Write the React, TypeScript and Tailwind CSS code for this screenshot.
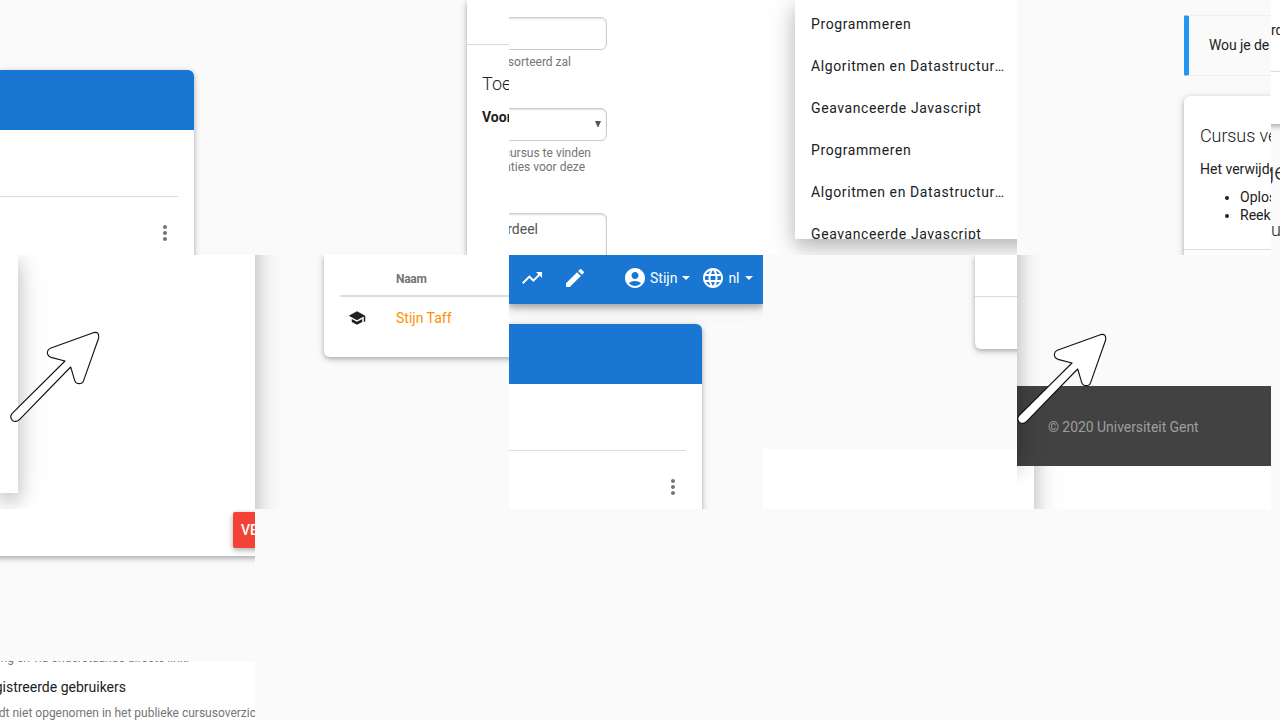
import type { ReactNode } from "react";
import {
  MdAccountCircle,
  MdEdit,
  MdLanguage,
  MdMoreVert,
  MdSchool,
  MdTrendingUp,
} from "react-icons/md";

const cardShadow =
  "shadow-[0_2px_5px_0_rgba(0,0,0,0.26),0_2px_10px_0_rgba(0,0,0,0.1)]";
const deepShadow =
  "shadow-[0_8px_17px_0_rgba(0,0,0,0.2),0_6px_30px_2px_rgba(0,0,0,0.12)]";

function Tile({ children, className = "" }: { children?: ReactNode; className?: string }) {
  return <section className={`relative min-w-0 overflow-hidden ${className}`}>{children}</section>;
}

function Arrow({ className }: { className: string }) {
  return (
    <svg className={`absolute ${className}`} width="92" height="94" viewBox="30 243 276 282">
      <path
        d="M280 248 Q298 243 296 264 L251 391 Q248 401 238 401 Q227 401 224 391 L212 351 L59 508 Q48 519 37 511 Q28 501 36 491 L195 333 L153 322 Q142 318 142 307 Q143 298 151 295 Z"
        fill="#fff"
        stroke="#111"
        strokeWidth="3.4"
        strokeLinejoin="round"
      />
    </svg>
  );
}

function CourseCard() {
  return (
    <div className={`h-[400px] w-[194px] overflow-hidden rounded-tr-[6px] bg-white ${cardShadow}`}>
      <div className="h-[60px] bg-[#1976d2]" />
      <div className="mr-4 h-[67px] border-b border-[#dcdcdc]" />
      <div className="flex justify-end pt-6 pr-[17px]">
        <MdMoreVert size={24} className="text-[#757575]" />
      </div>
    </div>
  );
}

function Help({ children, className }: { children: ReactNode; className: string }) {
  return (
    <div className={`flex justify-end whitespace-nowrap text-[12px] leading-[14px] text-[#757575] ${className}`}>
      {children}
    </div>
  );
}

function Caret() {
  return <span className="h-0 w-0 border-x-4 border-t-4 border-x-transparent border-t-white" />;
}

const courses = [
  "Programmeren",
  "Algoritmen en Datastructuren",
  "Geavanceerde Javascript",
  "Programmeren",
  "Algoritmen en Datastructuren",
  "Geavanceerde Javascript",
];

export default function App() {
  return (
    <main className="grid h-[720px] w-[1280px] grid-cols-[255px_254px_254px_254px_254px_9px] grid-rows-[255px_254px_211px] overflow-hidden bg-[#fafafa] font-['Roboto',sans-serif] text-[14px] leading-[18px] text-[#212121]">
      <Tile className="pt-[70px]">
        <CourseCard />
      </Tile>

      <Tile>
        <div className={`ml-[212px] h-full w-[100px] bg-white ${cardShadow}`}>
          <div className="h-[45px] border-b border-[#dcdcdc]" />
          <div className="pl-[15px] whitespace-nowrap">
            <h2 className="pt-[27px] text-[18px] leading-6 font-light">Toegang</h2>
            <p className="pt-3 font-bold">Voor</p>
          </div>
        </div>
      </Tile>

      <Tile className="bg-white">
        <div className="-ml-5 pt-[17px]">
          <div className="h-[33px] w-[118px] rounded-[6px] border border-[#ccc] shadow-[inset_0_1px_2px_rgba(0,0,0,0.12)]" />
          <Help className="mt-[5px] w-[82px]">gesorteerd zal</Help>
          <div className="mt-[39px] flex h-[33px] w-[118px] items-center justify-end rounded-[6px] border border-[#ccc] pr-[5px] pb-[2px] shadow-[inset_0_1px_2px_rgba(0,0,0,0.12)]">
            <svg width="6" height="6" viewBox="0 0 6 6">
              <path d="M0 0H6L3.4 6H2.6Z" fill="#555" />
            </svg>
          </div>
          <Help className="mt-[5px] w-[102px]">cursus te vinden</Help>
          <Help className="w-[96px]">registraties voor deze</Help>
          <div className="mt-[39px] h-[80px] w-[118px] rounded-[6px] border border-[#ccc] text-[#555] shadow-[inset_0_1px_2px_rgba(0,0,0,0.12)]">
            <div className="flex w-[48px] justify-end pt-[6px]">voordeel</div>
          </div>
        </div>
      </Tile>

      <Tile className="bg-white">
        <div className={`ml-[32px] h-[239px] w-[280px] overflow-hidden bg-white ${deepShadow}`}>
          <ul className="w-[212px] pt-[3px] pl-4 leading-[42px] tracking-[0.6px]">
            {courses.map((course, i) => (
              <li key={i} className="truncate">
                {course}
              </li>
            ))}
          </ul>
        </div>
      </Tile>

      <Tile className="pt-[15px] pl-[167px] whitespace-nowrap">
        <div className="h-[61px] w-[140px] rounded-[2px] border-y border-l-[5px] border-y-[#eeeeee] border-l-[#2196f3] pt-5 pl-5 tracking-[-0.1px]">
          Wou je de cursus
        </div>
        <div className={`mt-5 h-[200px] w-[140px] rounded-tl-[6px] bg-white ${cardShadow}`}>
          <div className="h-[154px] border-b border-[#dcdcdc] pt-7 pl-4">
            <h2 className="text-[18px] leading-6 font-light tracking-[-0.1px]">Cursus verwijderen</h2>
            <p className="mt-3">Het verwijderen</p>
            <ul className="mt-[10px] list-disc pl-10">
              <li>Oplossingen</li>
              <li>Reeksen</li>
            </ul>
          </div>
        </div>
      </Tile>

      <Tile>
        <div className={`-mx-3 h-[124px] bg-white px-3 ${cardShadow}`}>
          <div className="-mx-3 h-[72px] border-b border-[#dcdcdc] px-3 pt-[21px]">
            <span>rd</span>
          </div>
        </div>
        <div className="-ml-[10px] pt-9 text-[24px] leading-6 font-light">ge</div>
        <div className="pt-[34px] text-[18px] leading-6 font-light">u</div>
      </Tile>

      <Tile className="bg-white">
        <div className={`h-[238px] w-[18px] bg-white ${deepShadow}`} />
        <Arrow className="top-[76px] left-[10px]" />
      </Tile>

      <Tile>
        <div className="flex">
          <div className={`-mt-10 -ml-10 h-[400px] w-10 shrink-0 ${deepShadow}`} />
          <div className={`ml-[69px] h-[102px] w-[220px] shrink-0 rounded-bl-[6px] bg-white pl-4 ${cardShadow}`}>
            <div className="h-[42px] border-b-2 border-[#dcdcdc] pt-[15px] pl-14 text-[12px] font-bold tracking-[-0.3px] text-[#757575]">
              Naam
            </div>
            <div className="flex items-center pt-3 pl-2">
              <MdSchool size={18} />
              <span className="ml-[30px] text-[#ff8f00]">Stijn Taff</span>
            </div>
          </div>
        </div>
      </Tile>

      <Tile>
        <nav className="flex h-[49px] items-center bg-[#1976d2] pb-[3px] pl-[11px] text-white shadow-[0_4px_5px_0_rgba(0,0,0,0.14),0_2px_9px_1px_rgba(0,0,0,0.2),0_4px_20px_0_rgba(0,0,0,0.08)]">
          <MdTrendingUp size={24} />
          <MdEdit size={24} className="ml-[19px]" />
          <MdAccountCircle size={24} className="ml-9" />
          <span className="mr-[5px] ml-[3px]">Stijn</span>
          <Caret />
          <MdLanguage size={24} className="ml-[11px]" />
          <span className="mr-[5px] ml-[3px]">nl</span>
          <Caret />
        </nav>
        <div className="-ml-px pt-5">
          <CourseCard />
        </div>
      </Tile>

      <Tile className="flex flex-col">
        <div className="h-[194px] pl-[212px]">
          <div className={`h-[94px] w-[80px] rounded-bl-[6px] bg-white ${cardShadow}`}>
            <div className="h-[42px] border-b border-[#dcdcdc]" />
          </div>
        </div>
        <div className="flex-1 bg-white" />
      </Tile>

      <Tile>
        <div className="h-[131px]" />
        <footer className="h-[80px] bg-[#424242] pt-8 pl-[31px] text-[#9e9e9e] tracking-[-0.05px]">© 2020 Universiteit Gent</footer>
        <div className="h-[43px] overflow-hidden bg-white pt-px">
          <div className={`-mt-10 ml-[-23px] h-[200px] w-10 ${deepShadow}`} />
        </div>
        <div className={`absolute -top-10 -left-10 h-[246px] w-10 ${deepShadow}`} />
        <Arrow className="top-[78px] left-0" />
      </Tile>

      <Tile />

      <Tile className="whitespace-nowrap">
        <div className={`-mx-5 h-[47px] bg-white pt-[3px] pl-[253px] ${cardShadow}`}>
          <div className={`h-[36px] w-[120px] rounded-[2px] bg-[#f44336] pt-[9px] pl-2 font-medium text-white ${cardShadow}`}>
            VERWIJDEREN
          </div>
        </div>
        <div className="h-[105px]" />
        <div className="h-[59px] overflow-hidden bg-white">
          <Help className="-mt-[10px] w-[189px]">registratiepagina of toegang en via onderstaande directe link.</Help>
          <div className="flex w-[126px] justify-end pt-[13px]">Geregistreerde gebruikers</div>
          <div className="-ml-[21px] pt-2 text-[12px] text-[#757575]">wordt niet opgenomen in het publieke cursusoverzicht</div>
        </div>
      </Tile>
    </main>
  );
}
